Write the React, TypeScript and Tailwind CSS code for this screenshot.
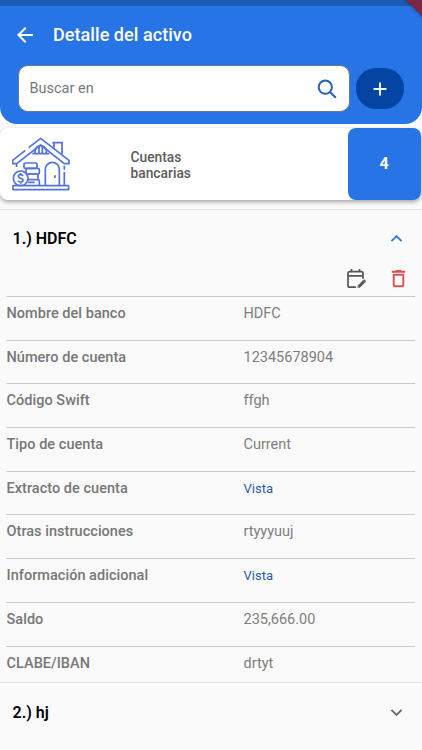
import { MdAdd, MdArrowBack, MdDeleteOutline, MdKeyboardArrowDown, MdKeyboardArrowUp } from "react-icons/md";

type Field = {
  label: string;
  value: string;
  link?: boolean;
};

const fields: Field[] = [
  { label: "Nombre del banco", value: "HDFC" },
  { label: "Número de cuenta", value: "12345678904" },
  { label: "Código Swift", value: "ffgh" },
  { label: "Tipo de cuenta", value: "Current" },
  { label: "Extracto de cuenta", value: "Vista", link: true },
  { label: "Otras instrucciones", value: "rtyyyuuj" },
  { label: "Información adicional", value: "Vista", link: true },
  { label: "Saldo", value: "235,666.00" },
  { label: "CLABE/IBAN", value: "drtyt" }
];

function HouseIcon() {
  return (
    <svg className="ml-3 mt-[9px] h-[54px] w-[58px] shrink-0" viewBox="36 22 174 162" fill="none" stroke="#5474da" strokeWidth="5.2" strokeLinejoin="round">
      <path d="M86 54 122 26l85 66v10h-14L122 46 50 102v10M76 62 38 92v10h12" />
      <path d="M162 54V41m24 33V41M157 39h32" />
      <path d="M97 72h51M105 71V65a17 17 0 0 1 34 0v6M117 50v21m10-21v21" />
      <path d="M193 108v12m0 7v40M136 167v-48a21 21 0 0 1 42 0v48" />
      <path d="M165 137v8" />
      <rect x="72" y="100" width="39" height="16" rx="4" />
      <rect x="78" y="116" width="40" height="17" rx="4" />
      <path d="M84 133h26q4 0 4 4v9q0 4-4 4H86M84 150h30q4 0 4 4v12M84 158h20" />
      <circle cx="62" cy="146" r="22" />
      <path d="M69 139q-2-4-7-4-7 0-7 5 0 4 7 6 7 1 7 6t-7 5q-6 0-8-4M62 130v5m0 22v5" />
      <rect x="39" y="168" width="167" height="12" rx="1" />
    </svg>
  );
}

function CalendarEditIcon() {
  return (
    <svg className="h-[20px] w-[19px]" viewBox="0 0 19 20" fill="none" stroke="#555" strokeWidth="1.7">
      <path d="M9 18.2H2.8Q1 18.2 1 16.4V4.4Q1 2.6 2.8 2.6h11.4Q16 2.6 16 4.4V9.8M1 6.8h15M4.5 0v3M12.5 0v3" />
      <path d="m10.8 18.5.4-2.1 4.8-4.8 1.8 1.8-4.8 4.8Z" fill="#555" strokeWidth=".6" />
      <path d="m16.7 10.9 1.8 1.8" strokeWidth="1.7" />
    </svg>
  );
}

function Header() {
  return (
    <header className="relative h-[124px] overflow-hidden rounded-b-[17px] bg-[#2774e7]">
      <div className="h-1.5 bg-[#1d5bb4]" />
      <div className="absolute -right-[17px] -top-[14px] h-[25px] w-[34px] rotate-45 bg-[#792743] shadow-[0_0_4px_rgba(0,0,0,0.4)]" />
      <div className="flex h-[58px] items-center pl-[13px] text-white">
        <MdArrowBack className="size-6" />
        <h1 className="ml-4 text-[18px] font-medium leading-6 tracking-[0.06px]">Detalle del activo</h1>
      </div>
      <div className="mt-px flex items-center pl-[18px]">
        <div className="flex h-[47px] w-[332px] items-center justify-between rounded-[10px] border border-[#687992] bg-white pl-[10.5px] pr-[12px]">
          <span className="text-[14.5px] text-[#777]">Buscar en</span>
          <svg className="size-5" viewBox="0 0 20 20" fill="none" stroke="#2460bd" strokeWidth="2">
            <circle cx="8.3" cy="8.2" r="6.6" />
            <path d="m13 13 5.8 5.8" />
          </svg>
        </div>
        <button className="ml-1.5 flex h-[41px] w-12 items-center justify-center rounded-[20px] bg-[#0444a3] text-white">
          <MdAdd className="size-[22px]" />
        </button>
      </div>
    </header>
  );
}

function SummaryCard() {
  return (
    <div className="mr-px mt-1 flex h-[72px] rounded-lg bg-white shadow-[0_2px_4px_rgba(0,0,0,0.35)]">
      <HouseIcon />
      <p className="ml-[60.5px] mt-[20.5px] flex-1 text-[13.8px] font-medium leading-4 text-[#5c5c5c]">
        Cuentas
        <br />
        bancarias
      </p>
      <div className="flex w-[73px] items-center justify-center rounded-lg bg-[#2774e7] pr-px text-[16px] font-bold text-white">4</div>
    </div>
  );
}

export default function App() {
  return (
    <div className="h-[750px] overflow-hidden bg-[#fafafa] font-['Roboto',sans-serif]">
      <Header />
      <SummaryCard />
      <section className="mt-[9px] h-[473px] border-t border-[#dedede]">
        <div className="flex h-[57px] items-center justify-between pl-[12.5px] pr-[14px]">
          <h2 className="text-[16px] font-semibold text-black">1.) HDFC</h2>
          <MdKeyboardArrowUp className="size-[23px] text-[#2f7de0]" />
        </div>
        <div className="flex h-[29px] items-start justify-end pr-[12px]">
          <div className="mr-[21px] mt-[1.5px]">
            <CalendarEditIcon />
          </div>
          <MdDeleteOutline className="size-[23px] text-[#dc514f]" />
        </div>
        <dl className="ml-1.5 mr-[7px]">
          {fields.map((field) => (
            <div key={field.label} className="flex h-[43.7px] border-t border-[#cbcbcb] pt-[7px] text-[14.5px] leading-5">
              <dt className="w-[237.5px] pl-[0.5px] font-medium tracking-[0.03px] text-[#777]">{field.label}</dt>
              {field.link ? (
                <dd className="text-[13px] text-[#285ca9]">{field.value}</dd>
              ) : (
                <dd className="text-[#7e7e7e]">{field.value}</dd>
              )}
            </div>
          ))}
        </dl>
      </section>
      <section className="flex h-[60px] items-center justify-between border-t border-[#dedede] pl-[12.5px] pr-[14px]">
        <h2 className="text-[16px] font-semibold text-black">2.) hj</h2>
        <MdKeyboardArrowDown className="size-[23px] text-[#6b6b6b]" />
      </section>
    </div>
  );
}
